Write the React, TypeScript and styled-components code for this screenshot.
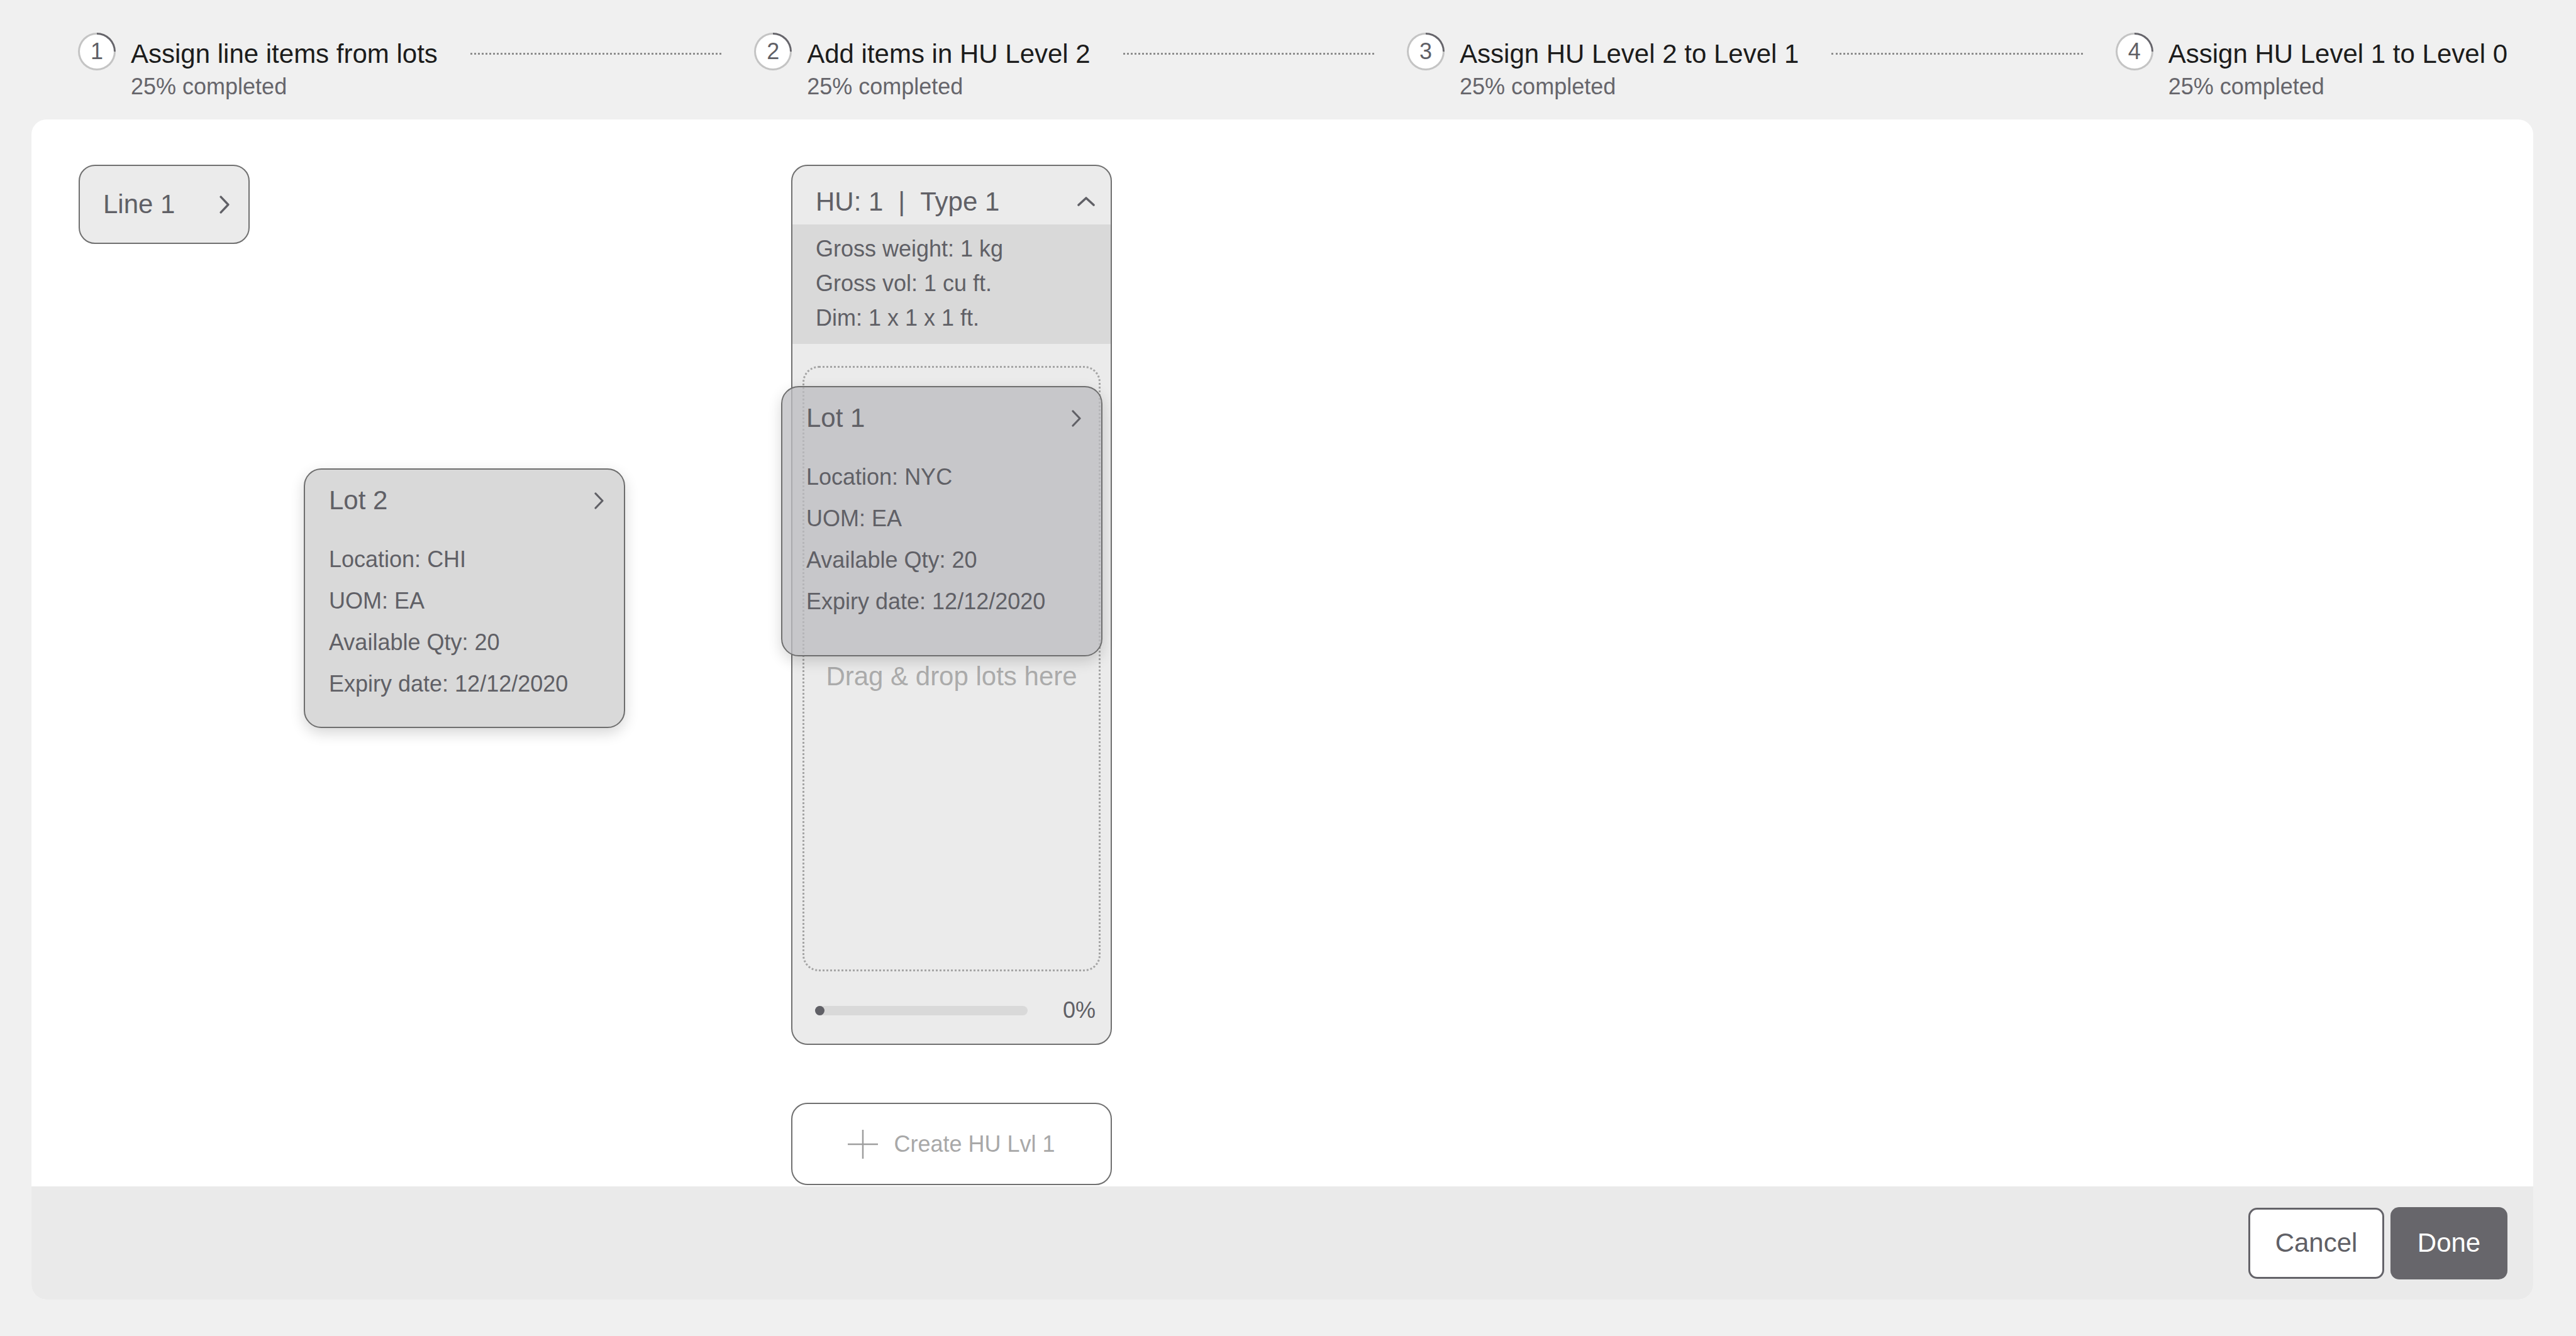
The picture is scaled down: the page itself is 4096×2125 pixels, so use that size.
import { Fragment } from 'react';
import styled, { createGlobalStyle } from 'styled-components';

const GlobalStyle = createGlobalStyle`
  html, body {
    margin: 0;
    padding: 0;
    background: #f0f0f0;
  }
  body {
    font-family: 'Liberation Sans', Arial, Helvetica, sans-serif;
    color: #606066;
  }
  * {
    box-sizing: border-box;
  }
`;

const Page = styled.div`
  width: 4096px;
  height: 2125px;
  display: flex;
  flex-direction: column;
  padding: 0 68px 58px 50px;
`;

/* ---------- stepper ---------- */

const Stepper = styled.div`
  height: 190px;
  flex-shrink: 0;
  display: flex;
  align-items: flex-start;
  padding: 62px 41px 0 74px;
`;

const Step = styled.div`
  display: flex;
  align-items: flex-start;
  gap: 24px;
  flex-shrink: 0;
`;

const StepBadge = styled.div<{ $progress: number }>`
  width: 60px;
  height: 60px;
  margin-top: -10px;
  flex-shrink: 0;
  border-radius: 50%;
  padding: 3px;
  background: conic-gradient(
    #66656b 0 ${(p) => p.$progress}%,
    #c4c4c4 ${(p) => p.$progress}% 100%
  );
`;

const StepNumber = styled.div`
  width: 100%;
  height: 100%;
  border-radius: 50%;
  background: #fff;
  display: flex;
  align-items: center;
  justify-content: center;
  font-size: 36px;
  color: #606066;
`;

const StepText = styled.div`
  display: flex;
  flex-direction: column;
`;

const StepTitle = styled.div`
  font-size: 42px;
  line-height: 48px;
  color: #1c1c1c;
  white-space: nowrap;
`;

const StepSub = styled.div`
  margin-top: 8px;
  font-size: 36px;
  line-height: 40px;
  color: #66656b;
  white-space: nowrap;
`;

const Connector = styled.div`
  flex: 1;
  margin: 22px 52px 0;
  border-top: 3px dotted #8d8d8d;
`;

/* ---------- panel ---------- */

const Panel = styled.div`
  flex: 1;
  min-height: 0;
  display: flex;
  flex-direction: column;
  background: #fff;
  border-radius: 24px;
  overflow: hidden;
`;

const Board = styled.div`
  flex: 1;
  min-height: 0;
  display: flex;
  align-items: flex-start;
  padding: 72px 0 0 75px;
  overflow: hidden;
`;

const LineButton = styled.button`
  width: 272px;
  height: 126px;
  flex-shrink: 0;
  display: flex;
  align-items: center;
  justify-content: space-between;
  padding: 0 30px 0 37px;
  background: #ebebeb;
  border: 2px solid #707070;
  border-radius: 26px;
  font: inherit;
  font-size: 42px;
  color: #606066;
`;

const LotsColumn = styled.div`
  width: 511px;
  margin-left: 86px;
  flex-shrink: 0;
  display: flex;
  flex-direction: column;
  gap: 53px;
`;

/* empty slot left behind by the lot being dragged */
const LotSlot = styled.div`
  height: 430px;
`;

const LotCard = styled.div<{ $height: number; $ghost?: boolean }>`
  width: 511px;
  height: ${(p) => p.$height}px;
  padding: 24px 32px 0 38px;
  border: 2px solid #6e6e6e;
  border-radius: 28px;
  background: ${(p) => (p.$ghost ? 'rgba(188, 188, 192, 0.76)' : '#d9d9d9')};
  box-shadow: 0 8px 22px rgba(0, 0, 0, 0.16);
  color: #606066;
`;

const GhostCard = styled(LotCard)`
  position: absolute;
  left: -16px;
  top: 352px;
  z-index: 2;
`;

const LotHeader = styled.div`
  height: 50px;
  display: flex;
  align-items: center;
  justify-content: space-between;
  font-size: 42px;
`;

const LotFields = styled.div`
  margin-top: 36px;
  font-size: 36px;
  line-height: 66px;
`;

const HuColumn = styled.div`
  position: relative;
  width: 510px;
  margin-left: 264px;
  flex-shrink: 0;
  display: flex;
  flex-direction: column;
`;

const HuCard = styled.div`
  border: 2px solid #707070;
  border-radius: 26px;
  background: #ebebeb;
  overflow: hidden;
`;

const HuHeader = styled.div`
  height: 93px;
  display: flex;
  align-items: center;
  justify-content: space-between;
  padding: 20px 25px 0 37px;
  font-size: 42px;
  color: #606066;
`;

const Pipe = styled.span`
  margin: 0 24px;
`;

const HuDetails = styled.div`
  background: #d9d9d9;
  padding: 11px 37px 14px;
  font-size: 36px;
  line-height: 55px;
  color: #606066;
`;

const DropZone = styled.div`
  height: 963px;
  margin: 35px 16px 0;
  padding-top: 24px;
  display: flex;
  align-items: center;
  justify-content: center;
  border: 3px dotted #a5a5a5;
  border-radius: 26px;
  font-size: 42px;
  color: #ababab;
`;

const ProgressRow = styled.div`
  height: 40px;
  margin: 42px 0 33px;
  padding: 0 24px 0 36px;
  display: flex;
  align-items: center;
  gap: 56px;
`;

const Track = styled.div`
  flex: 1;
  height: 15px;
  border-radius: 8px;
  background: #d9d9d9;
`;

const TrackFill = styled.div`
  height: 100%;
  min-width: 15px;
  border-radius: 8px;
  background: #606066;
`;

const Percent = styled.span`
  font-size: 36px;
  color: #606066;
`;

const CreateButton = styled.button`
  width: 100%;
  height: 131px;
  margin-top: 92px;
  display: flex;
  align-items: center;
  justify-content: center;
  gap: 25px;
  background: #fff;
  border: 2px solid #707070;
  border-radius: 26px;
  font: inherit;
  font-size: 36px;
  color: #a8a8a8;
`;

/* ---------- footer ---------- */

const Footer = styled.div`
  height: 180px;
  flex-shrink: 0;
  display: flex;
  align-items: center;
  justify-content: flex-end;
  gap: 10px;
  padding-right: 41px;
  background: #eaeaea;
`;

const Button = styled.button<{ $primary?: boolean }>`
  height: ${(p) => (p.$primary ? 115 : 113)}px;
  width: ${(p) => (p.$primary ? 186 : 216)}px;
  border-radius: 14px;
  font: inherit;
  font-size: 42px;
  border: ${(p) => (p.$primary ? 'none' : '3px solid #646369')};
  background: ${(p) => (p.$primary ? '#67666b' : '#fff')};
  color: ${(p) => (p.$primary ? '#fff' : '#606066')};
`;

/* ---------- icons ---------- */

function ChevronRight({ width = 15, height = 27 }: { width?: number; height?: number }) {
  return (
    <svg width={width} height={height} viewBox="0 0 15 27" fill="none" preserveAspectRatio="none">
      <polyline
        points="2,2 13,13.5 2,25"
        stroke="#606066"
        strokeWidth={3.2}
        strokeLinecap="round"
        strokeLinejoin="round"
      />
    </svg>
  );
}

function ChevronUp() {
  return (
    <svg width={28} height={15} viewBox="0 0 28 15" fill="none">
      <polyline
        points="2,13 14,2 26,13"
        stroke="#606066"
        strokeWidth={3.6}
        strokeLinecap="round"
        strokeLinejoin="round"
      />
    </svg>
  );
}

function PlusIcon() {
  return (
    <svg width={48} height={46} viewBox="0 0 48 46" fill="none">
      <line x1={24} y1={0} x2={24} y2={46} stroke="#9e9e9e" strokeWidth={2.5} />
      <line x1={0} y1={23} x2={48} y2={23} stroke="#9e9e9e" strokeWidth={2.5} />
    </svg>
  );
}

/* ---------- data ---------- */

const steps = [
  { n: 1, title: 'Assign line items from lots', progress: 25 },
  { n: 2, title: 'Add items in HU Level 2', progress: 25 },
  { n: 3, title: 'Assign HU Level 2 to Level 1', progress: 25 },
  { n: 4, title: 'Assign HU Level 1 to Level 0', progress: 25 },
];

interface Lot {
  name: string;
  location: string;
  uom: string;
  qty: number;
  expiry: string;
}

const draggedLot: Lot = { name: 'Lot 1', location: 'NYC', uom: 'EA', qty: 20, expiry: '12/12/2020' };
const restingLot: Lot = { name: 'Lot 2', location: 'CHI', uom: 'EA', qty: 20, expiry: '12/12/2020' };

function LotContent({ lot }: { lot: Lot }) {
  return (
    <>
      <LotHeader>
        <span>{lot.name}</span>
        <ChevronRight />
      </LotHeader>
      <LotFields>
        <div>Location: {lot.location}</div>
        <div>UOM: {lot.uom}</div>
        <div>Available Qty: {lot.qty}</div>
        <div>Expiry date: {lot.expiry}</div>
      </LotFields>
    </>
  );
}

export default function App() {
  const huProgress = 0;

  return (
    <>
      <GlobalStyle />
      <Page>
        <Stepper>
          {steps.map((s, i) => (
            <Fragment key={s.n}>
              {i > 0 && <Connector />}
              <Step>
                <StepBadge $progress={s.progress}>
                  <StepNumber>{s.n}</StepNumber>
                </StepBadge>
                <StepText>
                  <StepTitle>{s.title}</StepTitle>
                  <StepSub>{s.progress}% completed</StepSub>
                </StepText>
              </Step>
            </Fragment>
          ))}
        </Stepper>

        <Panel>
          <Board>
            <LineButton>
              <span>Line 1</span>
              <ChevronRight width={16} height={29} />
            </LineButton>

            <LotsColumn>
              <LotSlot />
              <LotCard $height={413}>
                <LotContent lot={restingLot} />
              </LotCard>
            </LotsColumn>

            <HuColumn>
              <HuCard>
                <HuHeader>
                  <span>
                    HU: 1<Pipe>|</Pipe>Type 1
                  </span>
                  <ChevronUp />
                </HuHeader>
                <HuDetails>
                  <div>Gross weight: 1 kg</div>
                  <div>Gross vol: 1 cu ft.</div>
                  <div>Dim: 1 x 1 x 1 ft.</div>
                </HuDetails>
                <DropZone>Drag &amp; drop lots here</DropZone>
                <ProgressRow>
                  <Track>
                    <TrackFill style={{ width: `${huProgress}%` }} />
                  </Track>
                  <Percent>{huProgress}%</Percent>
                </ProgressRow>
              </HuCard>

              <CreateButton>
                <PlusIcon />
                <span>Create HU Lvl 1</span>
              </CreateButton>

              <GhostCard $height={430} $ghost>
                <LotContent lot={draggedLot} />
              </GhostCard>
            </HuColumn>
          </Board>

          <Footer>
            <Button>Cancel</Button>
            <Button $primary>Done</Button>
          </Footer>
        </Panel>
      </Page>
    </>
  );
}
